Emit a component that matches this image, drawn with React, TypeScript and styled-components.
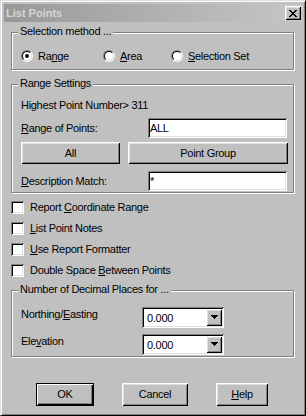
import React from 'react';
import styled, { createGlobalStyle } from 'styled-components';

const Global = createGlobalStyle`
  html, body { margin: 0; padding: 0; background: #c0c0c0; }
  body {
    font-family: "Liberation Sans", Arial, sans-serif;
    font-size: 11px;
    letter-spacing: -0.3px;
    color: #000;
  }
  * { box-sizing: border-box; }
`;

const raised = `
  box-shadow: inset 1px 1px #fff, inset -1px -1px #000, inset 2px 2px #dfdfdf, inset -2px -2px #808080;
`;
const sunken = `
  box-shadow: inset 1px 1px #808080, inset -1px -1px #fff, inset 2px 2px #000, inset -2px -2px #dfdfdf;
`;

const Frame = styled.div`
  width: 306px;
  height: 416px;
  background: #c0c0c0;
  border: 1px solid;
  border-color: #dfdfdf #000 #000 #dfdfdf;
  box-shadow: inset 1px 1px #fff, inset -1px -1px #808080;
  padding: 3px;
  display: flex;
  flex-direction: column;
`;

const TitleBar = styled.div`
  height: 18px;
  flex: none;
  display: flex;
  align-items: center;
  justify-content: space-between;
  padding: 0 1px 0 2px;
  background: linear-gradient(90deg, #999999, #c6c6c6);
`;

const TitleText = styled.span`
  font-weight: bold;
  color: #d6d6d6;
  line-height: 13px;
  letter-spacing: 0;
`;

const CloseButton = styled.div`
  width: 16px;
  height: 14px;
  background: #c0c0c0;
  display: flex;
  align-items: center;
  justify-content: center;
  ${raised}
`;

const Content = styled.div`
  display: flex;
  flex-direction: column;
  padding: 0 8px 0 7px;
`;

const Group = styled.div<{ $mt: number; $pt: number; $pb: number }>`
  position: relative;
  margin-top: ${p => p.$mt}px;
  padding: ${p => p.$pt}px 6px ${p => p.$pb}px 9px;
  border: 1px solid #808080;
  box-shadow: inset 1px 1px #fff, 1px 1px #fff;
  display: flex;
  flex-direction: column;
`;

const Legend = styled.span`
  position: absolute;
  top: -8px;
  left: 6px;
  padding: 0 2px;
  background: #c0c0c0;
  line-height: 13px;
  white-space: nowrap;
`;

const Key = styled.span`
  text-decoration: underline;
  text-underline-offset: 1px;
`;

const RadioRow = styled.div`
  display: flex;
  align-items: center;
  height: 12px;
`;

const RadioOption = styled.div<{ $w?: number }>`
  display: flex;
  align-items: center;
  gap: 5px;
  width: ${p => (p.$w ? `${p.$w}px` : 'auto')};
  line-height: 13px;
`;

const RadioOuter = styled.div`
  width: 12px;
  height: 12px;
  border-radius: 50%;
  border: 1px solid;
  border-color: #808080 #fff #fff #808080;
  transform: rotate(0deg);
  flex: none;
`;

const RadioInner = styled.div`
  width: 10px;
  height: 10px;
  border-radius: 50%;
  border: 1px solid;
  border-color: #000 #dfdfdf #dfdfdf #000;
  background: #fff;
  display: flex;
  align-items: center;
  justify-content: center;
`;

const RadioDot = styled.div`
  width: 4px;
  height: 4px;
  border-radius: 50%;
  background: #000;
`;

const TextLine = styled.div`
  line-height: 13px;
  height: 13px;
  white-space: nowrap;
`;

const FieldRow = styled.div<{ $mt: number }>`
  margin-top: ${p => p.$mt}px;
  display: flex;
  align-items: center;
`;

const FieldLabel = styled.div<{ $w: number }>`
  width: ${p => p.$w}px;
  flex: none;
  line-height: 13px;
  white-space: nowrap;
`;

const TextField = styled.div`
  flex: 1;
  height: 20px;
  background: #fff;
  display: flex;
  align-items: center;
  padding-left: 2px;
  ${sunken}
`;

const ButtonRow = styled.div<{ $mt: number }>`
  margin-top: ${p => p.$mt}px;
  display: flex;
  gap: 8px;
`;

const PushButton = styled.button<{ $w: number; $h: number; $default?: boolean }>`
  width: ${p => p.$w}px;
  height: ${p => p.$h}px;
  flex: none;
  padding: 0;
  margin: 0;
  font: inherit;
  letter-spacing: inherit;
  color: #000;
  background: #c0c0c0;
  border: ${p => (p.$default ? '1px solid #000' : 'none')};
  box-shadow: ${p =>
    p.$default
      ? 'inset 1px 1px #fff, inset -1px -1px #000, inset -2px -2px #808080'
      : 'inset 1px 1px #fff, inset -1px -1px #000, inset 2px 2px #dfdfdf, inset -2px -2px #808080'};
  display: flex;
  align-items: center;
  justify-content: center;
  line-height: 13px;
`;

const CheckList = styled.div`
  margin-top: 8px;
  display: flex;
  flex-direction: column;
  gap: 8px;
`;

const CheckRow = styled.div`
  display: flex;
  align-items: center;
  gap: 6px;
  height: 13px;
  line-height: 13px;
  white-space: nowrap;
`;

const CheckBox = styled.div`
  width: 13px;
  height: 13px;
  flex: none;
  background: #fff;
  ${sunken}
`;

const ComboRow = styled.div<{ $mt: number }>`
  margin-top: ${p => p.$mt}px;
  display: flex;
  align-items: flex-start;
`;

const ComboLabel = styled.div`
  width: 121px;
  flex: none;
  margin-top: 1px;
  line-height: 13px;
  white-space: nowrap;
`;

const Combo = styled.div`
  width: 82px;
  height: 21px;
  background: #fff;
  padding: 2px;
  display: flex;
  ${sunken}
`;

const ComboValue = styled.div`
  flex: 1;
  display: flex;
  align-items: center;
  padding-left: 3px;
`;

const ComboArrow = styled.div`
  width: 16px;
  height: 17px;
  background: #c0c0c0;
  display: flex;
  align-items: center;
  justify-content: center;
  padding-bottom: 1px;
  ${raised}
`;

const Footer = styled.div`
  margin-top: 26px;
  padding-left: 25px;
  display: flex;
  gap: 28px;
`;

const xPattern = [
  'XX....XX',
  '.XX..XX.',
  '..XXXX..',
  '...XX...',
  '..XXXX..',
  '.XX..XX.',
  'XX....XX',
];

const CloseIcon = () => (
  <svg width="8" height="7" viewBox="0 0 8 7" shapeRendering="crispEdges">
    {xPattern.flatMap((row, y) =>
      row.split('').map((c, x) => (c === 'X' ? <rect key={`${x}-${y}`} x={x} y={y} width="1" height="1" fill="#000" /> : null))
    )}
  </svg>
);

const DownArrow = () => (
  <svg width="7" height="4" viewBox="0 0 7 4" shapeRendering="crispEdges">
    <rect x="0" y="0" width="7" height="1" fill="#000" />
    <rect x="1" y="1" width="5" height="1" fill="#000" />
    <rect x="2" y="2" width="3" height="1" fill="#000" />
    <rect x="3" y="3" width="1" height="1" fill="#000" />
  </svg>
);

const Radio = ({ checked }: { checked?: boolean }) => (
  <RadioOuter>
    <RadioInner>{checked && <RadioDot />}</RadioInner>
  </RadioOuter>
);

const checks: [string, string, string][] = [
  ['Report ', 'C', 'oordinate Range'],
  ['', 'L', 'ist Point Notes'],
  ['', 'U', 'se Report Formatter'],
  ['Double Space ', 'B', 'etween Points'],
];

export default function App() {
  return (
    <>
      <Global />
      <Frame>
        <TitleBar>
          <TitleText>List Points</TitleText>
          <CloseButton>
            <CloseIcon />
          </CloseButton>
        </TitleBar>
        <Content>
          <Group $mt={10} $pt={17} $pb={7}>
            <Legend>Selection method ...</Legend>
            <RadioRow>
              <RadioOption $w={82}>
                <Radio checked />
                <span>
                  Ra<Key>n</Key>ge
                </span>
              </RadioOption>
              <RadioOption $w={68}>
                <Radio />
                <span>
                  <Key>A</Key>rea
                </span>
              </RadioOption>
              <RadioOption>
                <Radio />
                <span>
                  <Key>S</Key>election Set
                </span>
              </RadioOption>
            </RadioRow>
          </Group>

          <Group $mt={14} $pt={14} $pb={1}>
            <Legend>Range Settings</Legend>
            <TextLine>Highest Point Number&gt; 311</TextLine>
            <FieldRow $mt={6}>
              <FieldLabel $w={127}>
                <Key>R</Key>ange of Points:
              </FieldLabel>
              <TextField>ALL</TextField>
            </FieldRow>
            <ButtonRow $mt={4}>
              <PushButton $w={99} $h={22}>All</PushButton>
              <PushButton $w={160} $h={22}>Point Group</PushButton>
            </ButtonRow>
            <FieldRow $mt={7}>
              <FieldLabel $w={127}>
                <Key>D</Key>escription Match:
              </FieldLabel>
              <TextField>*</TextField>
            </FieldRow>
          </Group>

          <CheckList>
            {checks.map(([pre, k, post]) => (
              <CheckRow key={k}>
                <CheckBox />
                <span>
                  {pre}
                  <Key>{k}</Key>
                  {post}
                </span>
              </CheckRow>
            ))}
          </CheckList>

          <Group $mt={13} $pt={16} $pb={1}>
            <Legend>Number of Decimal Places for ...</Legend>
            <ComboRow $mt={0}>
              <ComboLabel>
                Northing/<Key>E</Key>asting
              </ComboLabel>
              <Combo>
                <ComboValue>0.000</ComboValue>
                <ComboArrow>
                  <DownArrow />
                </ComboArrow>
              </Combo>
            </ComboRow>
            <ComboRow $mt={6}>
              <ComboLabel>
                Ele<Key>v</Key>ation
              </ComboLabel>
              <Combo>
                <ComboValue>0.000</ComboValue>
                <ComboArrow>
                  <DownArrow />
                </ComboArrow>
              </Combo>
            </ComboRow>
          </Group>

          <Footer>
            <PushButton $w={58} $h={23} $default>OK</PushButton>
            <PushButton $w={66} $h={23}>Cancel</PushButton>
            <PushButton $w={52} $h={23}>
              <Key>H</Key>elp
            </PushButton>
          </Footer>
        </Content>
      </Frame>
    </>
  );
}
